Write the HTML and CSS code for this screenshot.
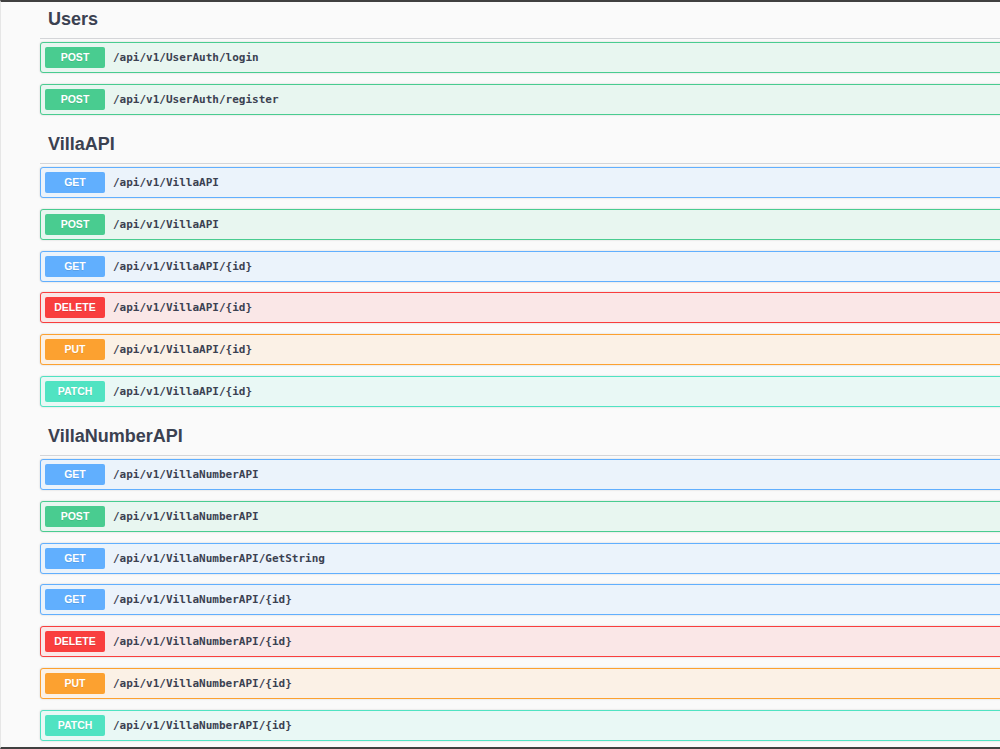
FILE: index.html
```html
<!DOCTYPE html>
<html>
<head>
<meta charset="utf-8">
<title>Swagger UI</title>
<link rel="stylesheet" href="styles.css">
</head>
<body>
<div class="frame">
  <div class="content">
    <section class="tag-section">
      <h3 class="tag">Users</h3>
      <div class="opblock post"><span class="method">POST</span><span class="path">/api/v1/UserAuth/login</span></div>
      <div class="opblock post"><span class="method">POST</span><span class="path">/api/v1/UserAuth/register</span></div>
    </section>
    <section class="tag-section">
      <h3 class="tag">VillaAPI</h3>
      <div class="opblock get"><span class="method">GET</span><span class="path">/api/v1/VillaAPI</span></div>
      <div class="opblock post"><span class="method">POST</span><span class="path">/api/v1/VillaAPI</span></div>
      <div class="opblock get"><span class="method">GET</span><span class="path">/api/v1/VillaAPI/{id}</span></div>
      <div class="opblock delete"><span class="method">DELETE</span><span class="path">/api/v1/VillaAPI/{id}</span></div>
      <div class="opblock put"><span class="method">PUT</span><span class="path">/api/v1/VillaAPI/{id}</span></div>
      <div class="opblock patch"><span class="method">PATCH</span><span class="path">/api/v1/VillaAPI/{id}</span></div>
    </section>
    <section class="tag-section">
      <h3 class="tag">VillaNumberAPI</h3>
      <div class="opblock get"><span class="method">GET</span><span class="path">/api/v1/VillaNumberAPI</span></div>
      <div class="opblock post"><span class="method">POST</span><span class="path">/api/v1/VillaNumberAPI</span></div>
      <div class="opblock get"><span class="method">GET</span><span class="path">/api/v1/VillaNumberAPI/GetString</span></div>
      <div class="opblock get"><span class="method">GET</span><span class="path">/api/v1/VillaNumberAPI/{id}</span></div>
      <div class="opblock delete"><span class="method">DELETE</span><span class="path">/api/v1/VillaNumberAPI/{id}</span></div>
      <div class="opblock put"><span class="method">PUT</span><span class="path">/api/v1/VillaNumberAPI/{id}</span></div>
      <div class="opblock patch"><span class="method">PATCH</span><span class="path">/api/v1/VillaNumberAPI/{id}</span></div>
    </section>
  </div>
</div>
</body>
</html>
```

FILE: styles.css
```css
* { box-sizing: border-box; }

html, body {
  margin: 0;
  padding: 0;
  background: #fafafa;
}

.frame {
  width: 1000px;
  height: 749px;
  overflow: hidden;
  border-top: 2px solid #404040;
  border-bottom: 2px solid #404040;
  border-left: 1px solid #e6e6e6;
  background: #fafafa;
}

.content {
  margin-top: -1px;
  margin-left: 39px;
  width: 1000px;
}

.tag {
  margin: 0 0 3.5px 0;
  padding: 7px 20px 7px 8px;
  height: 38px;
  line-height: 23px;
  font-family: "Liberation Sans", Arial, sans-serif;
  font-weight: 700;
  font-size: 18px;
  color: #3b4151;
  border-bottom: 1px solid rgba(59, 65, 81, 0.2);
}

.tag-section:first-child .tag {
  margin-bottom: 3px;
}

.opblock {
  display: flex;
  align-items: center;
  height: 31px;
  margin: 0 0 10.75px 0;
  padding: 0 4px;
  border: 1px solid;
  border-radius: 3px;
  box-shadow: 0 0 2px rgba(0, 0, 0, 0.19);
}

.method {
  width: 60px;
  height: 21px;
  line-height: 21px;
  text-align: center;
  border-radius: 2px;
  color: #fff;
  font-family: "Liberation Sans", Arial, sans-serif;
  font-weight: 700;
  font-size: 10.5px;
  text-shadow: 0 1px 0 rgba(0, 0, 0, 0.1);
}

.path {
  margin-left: 8px;
  font-family: "DejaVu Sans Mono", monospace;
  font-weight: 700;
  font-size: 11px;
  color: #3b4151;
}

.post { background: #e8f6f0; border-color: #49cc90; }
.post .method { background: #49cc90; }

.get { background: #ebf3fb; border-color: #61affe; }
.get .method { background: #61affe; }

.delete { background: #fae7e7; border-color: #f93e3e; }
.delete .method { background: #f93e3e; }

.put { background: #fbf1e6; border-color: #fca130; }
.put .method { background: #fca130; }

.patch { background: #e9f8f5; border-color: #50e3c2; }
.patch .method { background: #50e3c2; }
```
